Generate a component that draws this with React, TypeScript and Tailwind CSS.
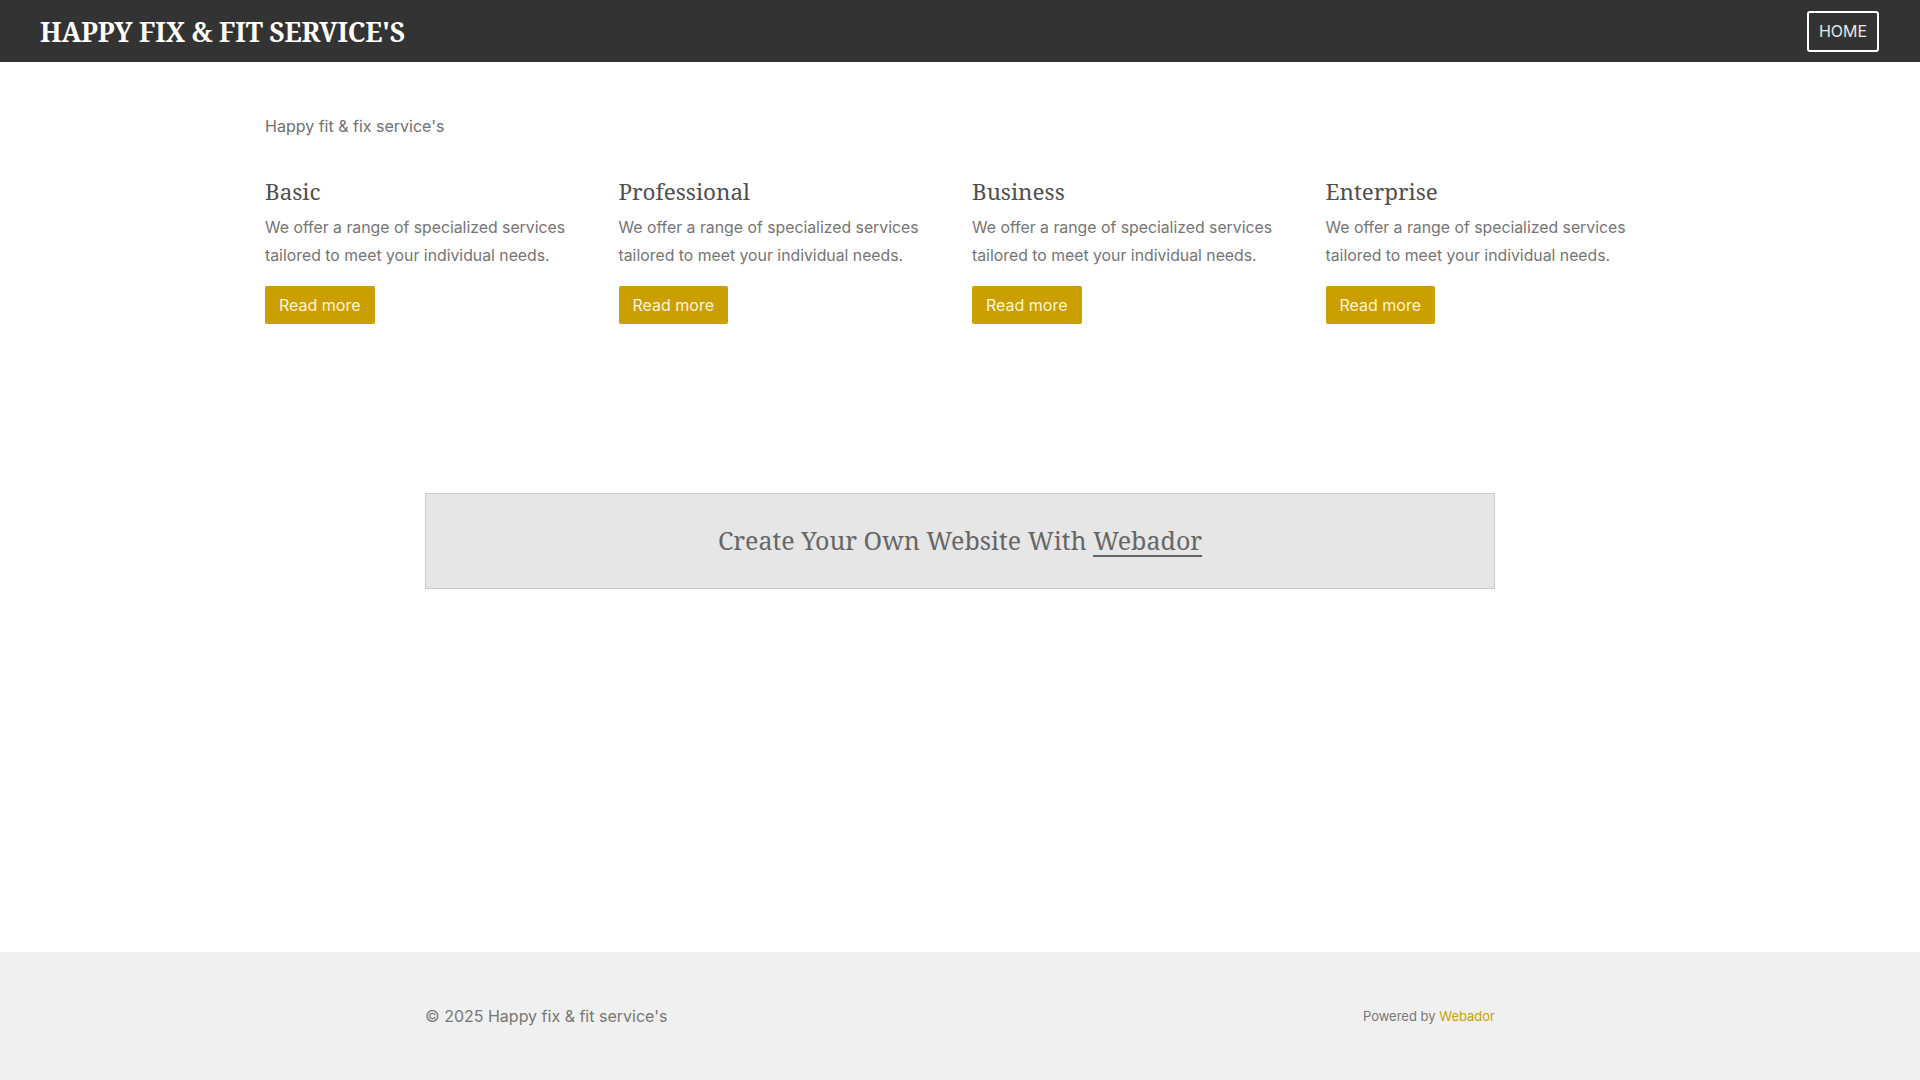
import React from "react";

const cols = ["Basic", "Professional", "Business", "Enterprise"];

export default function App() {
  return (
    <div className="min-h-screen flex flex-col bg-white font-['Inter','Noto_Sans',sans-serif]">
      <header className="h-[62px] bg-[#333333] flex items-center justify-between pl-[40px] pr-[41px]">
        <div className="text-white font-bold text-[26.4px] leading-none tracking-[-0.2px] mt-[2px] font-['Noto_Serif','DejaVu_Serif',serif]">
          HAPPY FIX &amp; FIT SERVICE'S
        </div>
        <a className="h-[41px] w-[72px] border-2 border-white rounded-[3px] flex items-center justify-center text-[16px] text-[#e6e6e6]">
          HOME
        </a>
      </header>

      <main className="flex-1">
        <div className="w-[1390px] mx-auto pt-[52px]">
          <p className="text-[16px] leading-[24px] text-[#707070]">Happy fit &amp; fix service's</p>
          <div className="grid grid-cols-4 gap-x-[24px] mt-[38px]">
            {cols.map((c) => (
              <div key={c}>
                <h2 className="text-[22.4px] leading-[32px] text-[#505050] font-['Noto_Serif','DejaVu_Serif',serif]">
                  {c}
                </h2>
                <p className="mt-[6px] text-[15.8px] leading-[28px] text-[#757575]">
                  We offer a range of specialized services tailored to meet your individual needs.
                </p>
                <button className="mt-[16px] h-[38px] px-[14px] bg-[#cc9f00] rounded-[2px] text-[16px] text-[#fbf3dc]">
                  Read more
                </button>
              </div>
            ))}
          </div>
        </div>

        <div className="w-[1070px] mx-auto mt-[169px] h-[96px] bg-[#e6e6e6] border border-[#cccccc] flex items-center justify-center">
          <span className="text-[25px] text-[#666666] font-['Noto_Serif','DejaVu_Serif',serif]">
            Create Your Own Website With{" "}
            <a className="underline decoration-2 underline-offset-[5px]">Webador</a>
          </span>
        </div>
      </main>

      <footer className="h-[128px] bg-[#f0f0f0]">
        <div className="w-[1070px] mx-auto h-full flex items-center justify-between">
          <span className="text-[16px] text-[#777777]">© 2025 Happy fix &amp; fit service's</span>
          <span className="text-[13px] text-[#777777] mt-[2px]">
            Powered by <a className="text-[#cc9f00]">Webador</a>
          </span>
        </div>
      </footer>
    </div>
  );
}
